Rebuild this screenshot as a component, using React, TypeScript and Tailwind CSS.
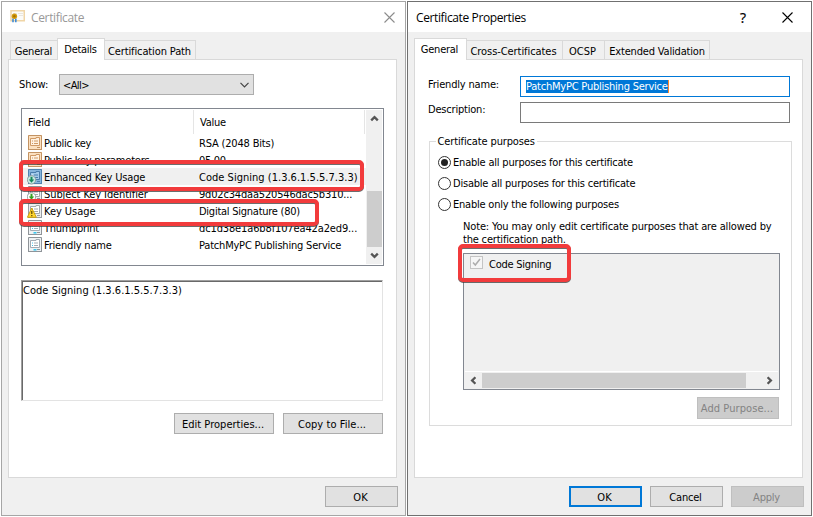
import type { ReactNode } from "react";

const tabBase = "border border-[#d9d9d9] text-center whitespace-nowrap";

function Tab({ label, active, box, text }: { label: string; active?: boolean; box: string; text: string }) {
  return (
    <div
      className={`${tabBase} ${box} ${
        active ? "relative z-10 -mx-px h-[22px] border-b-0 bg-white pt-[2px]" : "h-[19px] border-b-0 bg-[#f0f0f0] pt-[2px]"
      }`}
    >
      <span className={text}>{label}</span>
    </div>
  );
}

function Button({ label, box, text, kind = "normal" }: { label: string; box: string; text: string; kind?: "normal" | "default" | "disabled" }) {
  const look = {
    normal: "border border-[#adadad] bg-[#e1e1e1] text-black",
    default: "border-2 border-[#0078d7] bg-[#e1e1e1] text-black",
    disabled: "border border-[#bfbfbf] bg-[#cccccc] text-[#838383]",
  }[kind];
  return (
    <button className={`flex shrink-0 items-center justify-center pr-0.5 pt-px whitespace-nowrap ${look} ${box}`}>
      <span className={text}>{label}</span>
    </button>
  );
}

function CloseIcon({ className }: { className: string }) {
  return (
    <svg width="11" height="11" viewBox="0 0 11 11" className={className}>
      <path d="M.5 .5 10.5 10.5M10.5 .5 .5 10.5" stroke="currentColor" strokeWidth="1.1" fill="none" />
    </svg>
  );
}

function Arrow({ dir }: { dir: "up" | "down" | "left" | "right" }) {
  const turn = { up: "", down: "rotate-180", left: "-rotate-90", right: "rotate-90" }[dir];
  return (
    <svg width="9" height="9" viewBox="0 0 9 9" className={turn}>
      <path d="M1.2 6.4 4.500 3.100 7.800 6.400" stroke="#555" strokeWidth="2.300" fill="none" />
    </svg>
  );
}

function CertificateIcon() {
  return (
    <svg width="16" height="14" viewBox="0 0 16 14">
      <rect x="1" y=".750" width="13.250" height="10" fill="#fbfbf9" stroke="#f0d5a6" strokeWidth="1.500" />
      <path d="M3 3.500h4M8 3.500h5M9 5.500h4" stroke="#e9e6df" />
      <path d="M3 8.500v3.700M5.800 8.500v3.700" stroke="#3f8bd8" strokeWidth="1.600" fill="none" />
      <circle cx="4.400" cy="6.300" r="2.700" fill="#d39a0c" />
      <circle cx="4.400" cy="6.300" r="1.200" fill="#a87400" />
    </svg>
  );
}

type Kind = "v1" | "selected" | "extension" | "critical" | "property";

function FieldIcon({ kind }: { kind: Kind }) {
  const [edge, fill, ink, line, paper] = {
    v1: ["#c39363", "#fbe0c0", "#d09a66", "#cf9560", "#fff1e0"],
    selected: ["#4f83b0", "#86b5dc", "#4a7dab", "#e4f1fb", "#a4cbea"],
    extension: ["#8f9499", "#eceeef", "#a3a8ac", "#a5abb0", "#ffffff"],
    critical: ["#9a9ea3", "#eceeef", "#a3a8ac", "#a5abb0", "#ffffff"],
    property: ["#8f9499", "#eef1f3", "#a3abb3", "#43c0ea", "#ffffff"],
  }[kind];
  return (
    <svg width="16" height="17" viewBox="0 0 16 17" className="shrink-0">
      <rect x="1" y="1" width="14" height="15" fill={fill} />
      <path d="M1.500 16V1.500H14.500V16" fill="none" stroke={edge} />
      <path d="M1 15.500h14" stroke={edge} />
      <path d="M3.500 11.500V4.500h5.500v-1h3.500v8z" fill={paper} stroke={ink} />
      <path d="M5 7h1M5 9.500h1" stroke={line} strokeWidth="1.200" />
      <path d="M7 7h4M7 9.500h4" stroke={ink} strokeWidth="1" />
      <path d="M10 13.500h3" stroke={edge} strokeWidth="1" />
      {kind === "property" && <path d="M6.500 13.800h3" stroke="#2ec4ee" strokeWidth="1.500" />}
      {(kind === "selected" || kind === "extension") && (
        <>
          <circle cx="4.500" cy="11.800" r="4.200" fill={kind === "selected" ? "#c4e8e2" : "#ffffff"} stroke="#8b9a9a" strokeWidth=".900" />
          <path d="M4.500 8.800v3.700" stroke={kind === "selected" ? "#148a5c" : "#35a020"} strokeWidth="2" />
          <path d="M1.800 11.500h5.400L4.500 14.700z" fill={kind === "selected" ? "#148a5c" : "#35a020"} />
        </>
      )}
      {kind === "critical" && (
        <>
          <path d="M4.800 6 9.300 15.300H.400z" fill="#ffd633" stroke="#c99b00" strokeWidth=".900" strokeLinejoin="round" />
          <path d="M4.800 9v3M4.800 13v1.200" stroke="#5a4500" strokeWidth="1.200" />
        </>
      )}
    </svg>
  );
}

const rows: { kind: Kind; field: string; ft: string; value: string; vt: string }[] = [
  { kind: "v1", field: "Public key", ft: "tracking-[-0.25px]", value: "RSA (2048 Bits)", vt: "tracking-[-0.18px]" },
  { kind: "v1", field: "Public key parameters", ft: "tracking-[-0.23px]", value: "05 00", vt: "tracking-[-0.35px]" },
  { kind: "selected", field: "Enhanced Key Usage", ft: "tracking-[-0.15px]", value: "Code Signing (1.3.6.1.5.5.7.3.3)", vt: "tracking-[0.02px]" },
  { kind: "extension", field: "Subject Key Identifier", ft: "tracking-[-0.09px]", value: "9d02c34daa520546dac5b310...", vt: "tracking-[-0.18px]" },
  { kind: "critical", field: "Key Usage", ft: "tracking-[-0.05px]", value: "Digital Signature (80)", vt: "tracking-[-0.25px]" },
  { kind: "property", field: "Thumbprint", ft: "tracking-[-0.29px]", value: "dc1d38e1a6b8f107ea42a2ed9...", vt: "tracking-[-0.13px]" },
  { kind: "property", field: "Friendly name", ft: "tracking-[-0.2px]", value: "PatchMyPC Publishing Service", vt: "tracking-[-0.2px]" },
];

function Callout({ box }: { box: string }) {
  return (
    <div
      className={`pointer-events-none absolute z-20 rounded-[5px] border-4 border-[#f23b3c] drop-shadow-[0_1px_0.5px_rgba(60,60,60,0.75)] ${box}`}
    />
  );
}

function Radio({ checked, label, text }: { checked?: boolean; label: string; text: string }) {
  return (
    <label className="flex h-[21px] items-center gap-[2px] whitespace-nowrap">
      <span className="flex size-[13px] items-center justify-center rounded-full border border-[#333] bg-white">
        {checked && <span className="size-[7px] rounded-full bg-[#222]" />}
      </span>
      <span className={text}>{label}</span>
    </label>
  );
}

function Window({ border, header, tabs, children, footer }: { border: string; header: ReactNode; tabs: ReactNode; children: ReactNode; footer: ReactNode }) {
  return (
    <section className={`flex h-[515px] w-[405px] flex-col border bg-[#f0f0f0] ${border}`}>
      <header className="flex h-[30px] shrink-0 items-center bg-white font-['Open_Sans',sans-serif] text-[12px]">{header}</header>
      <div className="flex h-[27px] shrink-0 items-end">{tabs}</div>
      <div className="ml-1.5 h-[419px] w-[389px] shrink-0 border border-[#d9d9d9] bg-white">{children}</div>
      <footer className="mt-2 flex justify-end">{footer}</footer>
    </section>
  );
}

function CertificateWindow() {
  return (
    <Window
      border="border-[#a6a6a6]"
      header={
        <>
          <span className="ml-[8px]">
            <CertificateIcon />
          </span>
          <span className="ml-[5px] flex-1 tracking-[-0.35px] text-[#999]">Certificate</span>
          <CloseIcon className="mr-[10px] text-[#8c8c8c]" />
        </>
      }
      tabs={
        <div className="ml-2 flex items-end">
          <Tab label="General" box="w-[48px] pr-px" text="tracking-[-0.25px]" />
          <Tab label="Details" active box="w-[48px] -mb-px pr-px" text="tracking-[-0.28px]" />
          <Tab label="Certification Path" box="w-[92px] pr-px" text="tracking-[-0.12px]" />
        </div>
      }
      footer={<Button label="OK" box="mr-[7px] h-[21px] w-[73px]" text="" />}
    >
      <div className="flex flex-col pt-[14px] pl-3">
        <div className="flex h-[21px] items-center">
          <span className="ml-[-2px] w-10 tracking-[-0.05px]">Show:</span>
          <div className="flex h-[21px] w-[195px] items-center justify-between border border-[#adadad] bg-[#e1e1e1] px-1">
            <span className="mt-px -ml-px tracking-[-0.6px]">&lt;All&gt;</span>
            <svg width="9" height="6" viewBox="0 0 9 6">
              <path d="M.5 .8 4.500 4.800 8.500 .8" stroke="#444" strokeWidth="1.200" fill="none" />
            </svg>
          </div>
        </div>

        <div className="relative mt-[13px] flex h-[158px] w-[363px] border border-[#828790] bg-white p-px">
          <div className="flex-1">
            <div className="flex h-6 items-center">
              <div className="h-6 w-[171px] border-r border-[#e5e5e5] pt-[4px] pl-[5px] tracking-[-0.15px]">Field</div>
              <div className="h-6 w-[171px] border-r border-[#e5e5e5] pt-[4px] pl-[6px] tracking-[-0.28px]">Value</div>
            </div>
            {rows.map((r) => (
              <div key={r.field} className={`flex h-[17px] items-center whitespace-nowrap ${r.kind === "selected" ? "bg-[#f0f0f0]" : ""}`}>
                <span className="flex w-[176px] items-center pl-1">
                  <FieldIcon kind={r.kind} />
                  <span className={`ml-px pt-0.5 ${r.ft}`}>{r.field}</span>
                </span>
                <span className={`pt-0.5 ${r.vt}`}>{r.value}</span>
              </div>
            ))}
          </div>
          <div className="flex w-4 flex-col items-center bg-[#f0f0f0]">
            <div className="flex h-[17px] items-center">
              <Arrow dir="up" />
            </div>
            <div className="mt-16 h-14 w-[15px] bg-[#cdcdcd]" />
            <div className="flex h-[17px] items-center">
              <Arrow dir="down" />
            </div>
          </div>
          <Callout box="top-[51px] left-[-3px] h-[31px] w-[345px]" />
          <Callout box="top-[90px] left-[-3px] h-[27px] w-[300px]" />
        </div>

        <div className="mt-[14px] h-[121px] w-[362px] border border-t-[#a0a0a0] border-r-[#e3e3e3] border-b-[#e3e3e3] border-l-[#a0a0a0] bg-white">
          <div className="h-full border-t border-l border-[#696969] tracking-[0.03px]">Code Signing (1.3.6.1.5.5.7.3.3)</div>
        </div>

        <div className="mt-3 flex gap-[9px] pl-[153px]">
          <Button label="Edit Properties..." box="h-[21px] w-[100px]" text="tracking-[0.03px]" />
          <Button label="Copy to File..." box="h-[21px] w-[100px]" text="tracking-[0.06px]" />
        </div>
      </div>
    </Window>
  );
}

function PropertiesWindow() {
  return (
    <Window
      border="border-[#707070]"
      header={
        <>
          <span className="ml-2 flex-1 tracking-[-0.38px] text-black">Certificate Properties</span>
          <span className="mr-[36px] text-[14px] text-black [-webkit-text-stroke:0.2px_black]">?</span>
          <CloseIcon className="mr-[18px] text-black" />
        </>
      }
      tabs={
        <div className="ml-[7px] flex items-end">
          <Tab label="General" active box="w-[53px] -mb-px pr-0.5" text="tracking-[-0.25px]" />
          <Tab label="Cross-Certificates" box="w-[97px] pr-0.5" text="tracking-[-0.07px]" />
          <Tab label="OCSP" box="-ml-px w-[43px] pr-0.5" text="" />
          <Tab label="Extended Validation" box="-ml-px w-[106px]" text="tracking-[-0.18px]" />
        </div>
      }
      footer={
        <div className="mr-[7px] flex gap-2">
          <Button label="OK" kind="default" box="h-[21px] w-[73px]" text="" />
          <Button label="Cancel" box="h-[21px] w-[73px]" text="tracking-[-0.2px]" />
          <Button label="Apply" kind="disabled" box="h-[21px] w-[73px]" text="tracking-[-0.22px]" />
        </div>
      }
    >
      <div className="flex flex-col pt-4 pl-[13px]">
        <div className="flex h-[21px]">
          <span className="w-[92px] tracking-[-0.18px]">Friendly name:</span>
          <div className="flex h-[21px] w-[270px] items-center border border-[#0078d7] bg-white pl-[5px]">
            <span className="h-[13px] w-[143px] border-r border-[#ff8728] bg-[#0078d7] leading-[13px] tracking-[-0.22px] whitespace-nowrap text-white">
              PatchMyPC Publishing Service
            </span>
          </div>
        </div>
        <div className="mt-[5px] flex h-[21px]">
          <span className="-mt-px w-[92px] tracking-[-0.2px]">Description:</span>
          <div className="h-[21px] w-[270px] border border-[#7a7a7a] bg-white" />
        </div>

        <fieldset className="mt-[10px] ml-px h-[293px] w-[363px] border border-[#dcdcdc]">
          <legend className="ml-[6px] h-[16px] w-[101px] pl-[1.5px] leading-[18px] tracking-[-0.13px] whitespace-nowrap">Certificate purposes</legend>
          <div className="pt-[3px] pl-2">
            <Radio checked label="Enable all purposes for this certificate" text="tracking-[-0.2px]" />
            <Radio label="Disable all purposes for this certificate" text="tracking-[-0.21px]" />
            <Radio label="Enable only the following purposes" text="tracking-[-0.22px]" />
          </div>
          <div className="mt-[5px] ml-[33px] leading-[13px] whitespace-nowrap">
            <div className="tracking-[-0.15px]">Note: You may only edit certificate purposes that are allowed by</div>
            <div className="tracking-[-0.19px]">the certification path.</div>
          </div>
          <div className="relative mt-[7px] ml-[33px] flex h-[137px] w-[317px] flex-col border border-[#828790] bg-[#f0f0f0]">
            <div className="flex flex-1 items-start gap-[6px] pt-[2px] pl-[6px]">
              <span className="flex size-[13px] items-center justify-center border border-[#c4c4c4] bg-[#f6f6f6]">
                <svg width="11" height="11" viewBox="0 0 11 11">
                  <path d="M2 5.500 4.300 8 9 2" stroke="#adadad" strokeWidth="1.500" fill="none" />
                </svg>
              </span>
              <span className="leading-[18px] tracking-[-0.25px]">Code Signing</span>
            </div>
            <div className="mx-px mb-px flex h-[17px] items-center border-t border-white">
              <span className="flex w-[17px] justify-center">
                <Arrow dir="left" />
              </span>
              <span className="h-[15px] w-[266px] bg-[#cdcdcd]" />
              <span className="ml-[15px] flex w-[17px] justify-center">
                <Arrow dir="right" />
              </span>
            </div>
            <Callout box="top-[-10px] left-[-6px] h-[38px] w-[113px]" />
          </div>
          <Button label="Add Purpose..." kind="disabled" box="mt-[7px] ml-[267px] h-[22px] w-[82px]" text="tracking-[0.08px]" />
        </fieldset>
      </div>
    </Window>
  );
}

export default function App() {
  return (
    <main className="flex h-[517px] w-[813px] gap-px overflow-hidden bg-white pt-px pl-px font-['DejaVu_Sans_Condensed','Noto_Sans',sans-serif] text-[11px] leading-[17px] text-black">
      <CertificateWindow />
      <PropertiesWindow />
    </main>
  );
}
